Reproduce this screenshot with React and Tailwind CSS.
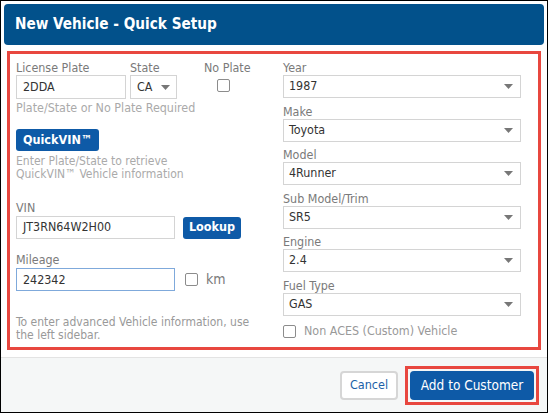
import { useState } from "react";

const font = { fontFamily: '"DejaVu Sans Condensed", "DejaVu Sans", Verdana, sans-serif' };

const Caret = () => (
  <svg width="9" height="5" viewBox="0 0 9 5" className="shrink-0">
    <path d="M0 0h9L4.5 5z" fill="#777" />
  </svg>
);

const Select = ({ value, className = "" }) => (
  <div className={`h-[23px] border border-[#d4d4d4] bg-white flex items-center justify-between pl-[5px] pr-[7px] text-[12.4px] text-[#333] ${className}`}>
    <span>{value}</span>
    <Caret />
  </div>
);

const Box = () => <div className="w-[13px] h-[13px] border border-[#8c8c8c] rounded-[2px] bg-white shrink-0" />;

const Field = ({ label, value }) => (
  <div>
    <div className="h-[14px] leading-[14px] text-[12.4px] text-[#7a7a7a]">{label}</div>
    <Select value={value} />
  </div>
);

const rightFields = [
  ["Year", "1987"],
  ["Make", "Toyota"],
  ["Model", "4Runner"],
  ["Sub Model/Trim", "SR5"],
  ["Engine", "2.4"],
  ["Fuel Type", "GAS"],
];

export default function App() {
  const [mileage, setMileage] = useState("242342");

  return (
    <div style={font} className="w-[548px] h-[413px] border border-black bg-white flex flex-col overflow-hidden">
      <div className="mx-[3px] mt-[3px] h-[41px] bg-[#02518b] rounded-[4px] px-[11px] flex items-center">
        <h1 className="text-white font-bold text-[15.2px]">New Vehicle - Quick Setup</h1>
      </div>

      <div className="mx-[6px] mt-[6px] h-[299px] border-[3px] border-[#e8473f] pl-[6px] pr-[8px] pt-[7px] grid grid-cols-[260px_238px] gap-[7px] text-[12.4px]">
        {/* left column */}
        <div className="flex flex-col">
          <div className="flex items-start">
            <div className="w-[110px]">
              <div className="h-[14px] leading-[14px] text-[#7a7a7a]">License Plate</div>
              <div className="h-[24px] border border-[#d4d4d4] px-[6px] flex items-center text-[#333]">2DDA</div>
            </div>
            <div className="w-[47px] ml-[4px]">
              <div className="h-[14px] leading-[14px] text-[#7a7a7a]">State</div>
              <div className="h-[24px] border border-[#d4d4d4] pl-[6px] pr-[6px] flex items-center justify-between text-[#333]">
                <span>CA</span>
                <Caret />
              </div>
            </div>
            <div className="ml-[27px] flex flex-col">
              <div className="h-[14px] leading-[14px] text-[#7a7a7a]">No Plate</div>
              <div className="mt-[4px] ml-[13px]"><Box /></div>
            </div>
          </div>
          <p className="mt-[2px] h-[14px] leading-[14px] text-[#aaa]">Plate/State or No Plate Required</p>

          <button className="mt-[14px] self-start h-[22px] w-[83px] rounded-[3px] bg-[#0e5aa7] text-white text-[12.5px] font-bold">QuickVIN™</button>
          <p className="mt-[4px] leading-[13px] text-[12px] text-[#aaa]">
            Enter Plate/State to retrieve
            <br />
            QuickVIN™ Vehicle information
          </p>

          <div className="mt-[20px] h-[14px] leading-[14px] text-[#7a7a7a]">VIN</div>
          <div className="mt-px flex items-center">
            <div className="w-[159px] h-[23px] border border-[#d4d4d4] px-[6px] flex items-center text-[#333]">JT3RN64W2H00</div>
            <button className="ml-[8px] h-[22px] w-[58px] rounded-[3px] bg-[#0e5aa7] text-white text-[12.5px] font-bold">Lookup</button>
          </div>

          <div className="mt-[14px] h-[14px] leading-[14px] text-[#7a7a7a]">Mileage</div>
          <div className="mt-px flex items-center">
            <input
              value={mileage}
              onChange={(e) => setMileage(e.target.value)}
              className="w-[159px] h-[23px] border border-[#7fa9db] px-[6px] text-[12.4px] text-[#333] outline-none"
            />
            <div className="ml-[10px]"><Box /></div>
            <span className="ml-[8px] text-[14px] text-[#7a7a7a]">km</span>
          </div>

          <p className="mt-[25px] leading-[13px] text-[12px] text-[#999]">
            To enter advanced Vehicle information, use
            <br />
            the left sidebar.
          </p>
        </div>

        {/* right column */}
        <div className="flex flex-col gap-[6.5px]">
          {rightFields.map(([label, value]) => (
            <Field key={label} label={label} value={value} />
          ))}
          <div className="flex items-center gap-[8px]">
            <Box />
            <span className="text-[#999]">Non ACES (Custom) Vehicle</span>
          </div>
        </div>
      </div>

      <div className="mt-[7px] flex-1 border-t border-[#e3e3e3] bg-[#f5f7f7] flex items-center justify-end pr-[8px]">
        <button className="h-[29px] w-[58px] rounded-[4px] border-2 border-[#d6d6d6] bg-white text-[12.5px] text-[#1b5fa8]">Cancel</button>
        <div className="ml-[7px] border-[3px] border-[#e8473f] p-[2px]">
          <button className="h-[29px] w-[124px] rounded-[4px] bg-[#0e5aa7] text-white text-[13.5px]">Add to Customer</button>
        </div>
      </div>
    </div>
  );
}
